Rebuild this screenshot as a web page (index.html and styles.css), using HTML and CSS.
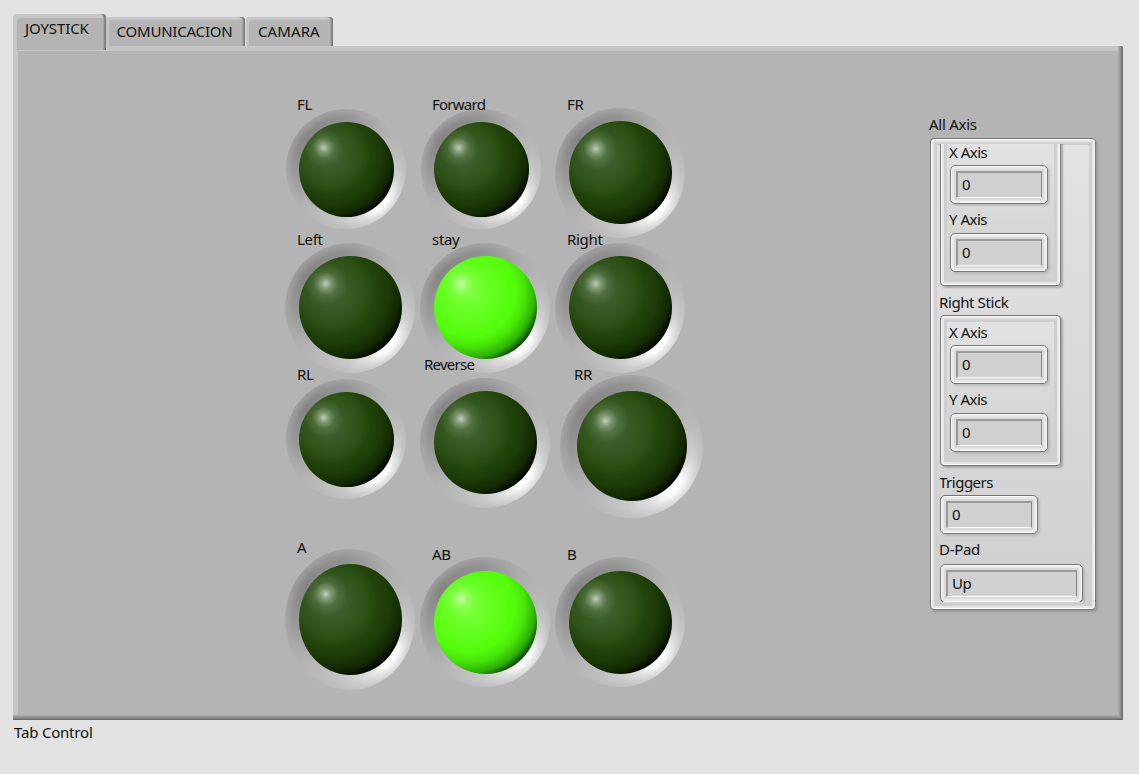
FILE: index.html
```html
<!DOCTYPE html>
<html lang="es">
<head>
<meta charset="utf-8">
<title>Tab Control</title>
<link rel="stylesheet" href="styles.css">
</head>
<body>
<main class="tab-control">
  <nav class="tabs">
    <div class="tab active"><span class="t-joy">JOYSTICK</span></div>
    <div class="tab com"><span class="t-com">COMUNICACION</span></div>
    <div class="tab cam"><span class="t-cam">CAMARA</span></div>
  </nav>
  <section class="page">
    <div class="leds">
      <div class="led small"><span>FL</span><i class="ring"><b class="bulb"></b></i></div>
      <div class="led small"><span class="tight">Forward</span><i class="ring"><b class="bulb"></b></i></div>
      <div class="led"><span>FR</span><i class="ring"><b class="bulb"></b></i></div>
      <div class="led"><span>Left</span><i class="ring"><b class="bulb"></b></i></div>
      <div class="led on"><span>stay</span><i class="ring"><b class="bulb"></b></i></div>
      <div class="led"><span>Right</span><i class="ring"><b class="bulb"></b></i></div>
      <div class="led small"><span>RL</span><i class="ring"><b class="bulb"></b></i></div>
      <div class="led reverse"><span class="tight">Reverse</span><i class="ring"><b class="bulb"></b></i></div>
      <div class="led large"><span>RR</span><i class="ring"><b class="bulb"></b></i></div>
      <div class="led tall"><span>A</span><i class="ring"><b class="bulb"></b></i></div>
      <div class="led on"><span>AB</span><i class="ring"><b class="bulb"></b></i></div>
      <div class="led"><span>B</span><i class="ring"><b class="bulb"></b></i></div>
    </div>
    <aside class="axes">
      <div class="caption all">All Axis</div>
      <div class="cluster outer">
        <div class="viewport">
          <div class="cluster stick cut">
            <div class="caption">X Axis</div><div class="field"><p>0</p></div>
            <div class="caption">Y Axis</div><div class="field"><p>0</p></div>
          </div>
          <div class="caption right-stick">Right Stick</div>
          <div class="cluster stick full">
            <div class="caption">X Axis</div><div class="field"><p>0</p></div>
            <div class="caption">Y Axis</div><div class="field"><p>0</p></div>
          </div>
          <div class="caption triggers">Triggers</div>
          <div class="field"><p>0</p></div>
          <div class="caption dpad">D-Pad</div>
          <div class="field wide"><p>Up</p></div>
        </div>
      </div>
    </aside>
  </section>
  <footer>Tab Control</footer>
</main>
</body>
</html>
```
FILE: styles.css
```css
* { box-sizing: border-box; }
body {
  margin: 0;
  background: #e2e2e2;
  color: #111;
  font: 15px/18px "Noto Sans", "Open Sans", sans-serif;
  letter-spacing: -0.3px;
  white-space: nowrap;
  overflow: hidden;
}
.tab-control { padding: 14px 0 0 13px; width: 1139px; height: 774px; }

/* Tabs */
.tabs { display: flex; height: 32px; align-items: flex-end; }
.tab {
  height: 29px;
  background: #b4b4b4;
  border-radius: 4px 4px 0 0;
  box-shadow: inset -1px 0 #777, inset -2px 0 #8c8c8c, inset -3px 0 #a3a3a3, inset 3px 3px #c6c6c6;
}
.tab span { display: block; }
.tab.active { position: relative; width: 93px; height: 36px; margin-bottom: -4px; padding: 5px 0 0 12px; box-shadow: inset -1px 0 #777, inset -2px 0 #8c8c8c, inset -3px 0 #a3a3a3, inset 4px 4px #c6c6c6; }
.tab.com { width: 139px; padding: 5px 0 0 10.5px; }
.tab.cam { width: 87px; margin-left: 1px; padding: 5px 0 0 12px; }
.t-joy { letter-spacing: -0.1px; }
.t-com { letter-spacing: -0.2px; }
.t-cam { letter-spacing: 0.1px; }

.page {
  display: flex;
  width: 1110px;
  height: 674px;
  padding: 5px;
  background: #b4b4b4;
  border-radius: 0 3px 0 0;
  box-shadow:
    inset -1px -1px #6c6c6c, inset -2px -2px #7f7f7f, inset -3px -3px #8e8e8e,
    inset -4px -4px #9c9c9c, inset -5px -5px #a9a9a9, inset 5px 5px #c6c6c6;
}

/* LED grid */
.leds {
  display: grid;
  grid-template-columns: 135px 135px 160px;
  grid-template-rows: 135px 135px 179.5px 150px;
  margin: 44px 0 0 267px;
  width: 430px;
}
.led { --ring: 130px; --ring-h: var(--ring); --bulb: 103px; --bulb-h: var(--bulb); height: 20px; }
.led span { display: block; padding-left: 12px; height: 20px; position: relative; z-index: 1; }
.led .tight { letter-spacing: -0.75px; }
.ring {
  display: grid;
  place-items: center;
  width: var(--ring);
  height: var(--ring-h);
  margin-top: -7.5px;
  border-radius: 50%;
  background:
    radial-gradient(closest-side, transparent 86%, #b4b4b488 100%),
    conic-gradient(#939393, #adadad 40deg, #bdbdbd 75deg, #d0d0d0 100deg, #fff 126deg, #fff 142deg, #e0e0e0 160deg, #c9c9c9 182deg, #b4b4b4 225deg, #999 265deg, #858585 305deg, #939393);
}
.bulb {
  width: var(--bulb);
  height: var(--bulb-h);
  border-radius: 50%;
  background:
    radial-gradient(circle at 26% 27%, #c0cdb9 0, #a1b596aa 5%, #7f996f44 11%, #7f996f00 20%),
    radial-gradient(circle at 32% 35%, #49693acc, #2e511900 45%),
    radial-gradient(circle at 35% 35%, #2c5018 0, #264b0d 35%, #1d3c08 55%, #122802 68%, #020500 77%);
}
.on .bulb {
  background:
    radial-gradient(circle at 26% 27%, #c5ffa6 0, #a5ff77aa 6%, #90ff5544 12%, #7fff4000 20%),
    radial-gradient(circle at 34% 36%, #7cff3c, #5aff1000 42%),
    radial-gradient(circle at 35% 35%, #58ff10 0, #55fd0d 47%, #46e408 58%, #2fb005 69%, #0f4602 77%);
}
.small { --ring: 120px; --bulb: 95px; padding-left: 1px; }
.small span { padding-left: 11px; }
.small .ring { margin-top: -6px; }
.large { --ring: 143px; --bulb: 110px; padding-left: 5px; }
.large span { padding-left: 14px; }
.large .ring { margin-top: -10.5px; }
.reverse span { padding-left: 4px; margin-top: -10px; }
.reverse .ring { margin-top: 2.5px; }
.tall { --ring-h: 141px; --bulb-h: 111px; }
.tall span { margin-top: -7px; }
.tall .ring { margin-top: -9px; }

/* Axis cluster */
.axes { width: 167px; margin: 64px 0 0 215px; }
.caption { height: 20px; }
.all { margin-left: -1px; letter-spacing: -0.25px; }
.cluster {
  border: 1px solid #777;
  border-radius: 4px;
  background: linear-gradient(#e3e3e3, #cfcfcf);
  box-shadow: inset 0 0 0 1px #fafafa, inset 0 0 0 3px #e6e6e6, inset 0 0 0 6px #cfcfcf, 2px 2px 2px #8889;
}
.outer { width: 166px; height: 472px; margin-top: 3px; padding: 5px 9px; }
.viewport { height: 458px; overflow: hidden; padding-right: 4px; }
.stick { width: 121px; height: 151px; padding: 8px 9px; }
.cut { margin-top: -9px; }
.full { margin-top: 2px; }
.stick .caption { height: 17px; line-height: 17px; letter-spacing: -0.5px; margin-left: -1px; }
.stick .field { margin-top: 4px; }
.stick .caption:nth-child(3) { margin-top: 8px; line-height: 15px; }
.field {
  width: 98px;
  height: 39px;
  margin-top: 2px;
  padding: 5px;
  border: 1px solid #777;
  border-radius: 5px;
  background: #dadada;
  box-shadow: inset 0 0 0 1px #fafafa, inset 0 0 0 3px #e8e8e8, 2px 2px 2px #aaa9;
}
.field p {
  margin: 0;
  height: 27px;
  padding: 2px 0 0 4px;
  background: #d0d0d0;
  border: solid;
  border-width: 2px 1px 1px 2px;
  border-color: #999 #858585 #fafafa #999;
  letter-spacing: -0.5px;
}
.right-stick { margin: 7px 0 0 -1px; letter-spacing: -0.4px; }
.triggers { margin: 7px 0 0 -1px; letter-spacing: -0.5px; }
.dpad { margin: 6px 0 0 -1px; }
.field.wide { width: 143px; margin-top: 4px; }
footer { padding: 3px 0 0 1px; letter-spacing: -0.2px; }
```
